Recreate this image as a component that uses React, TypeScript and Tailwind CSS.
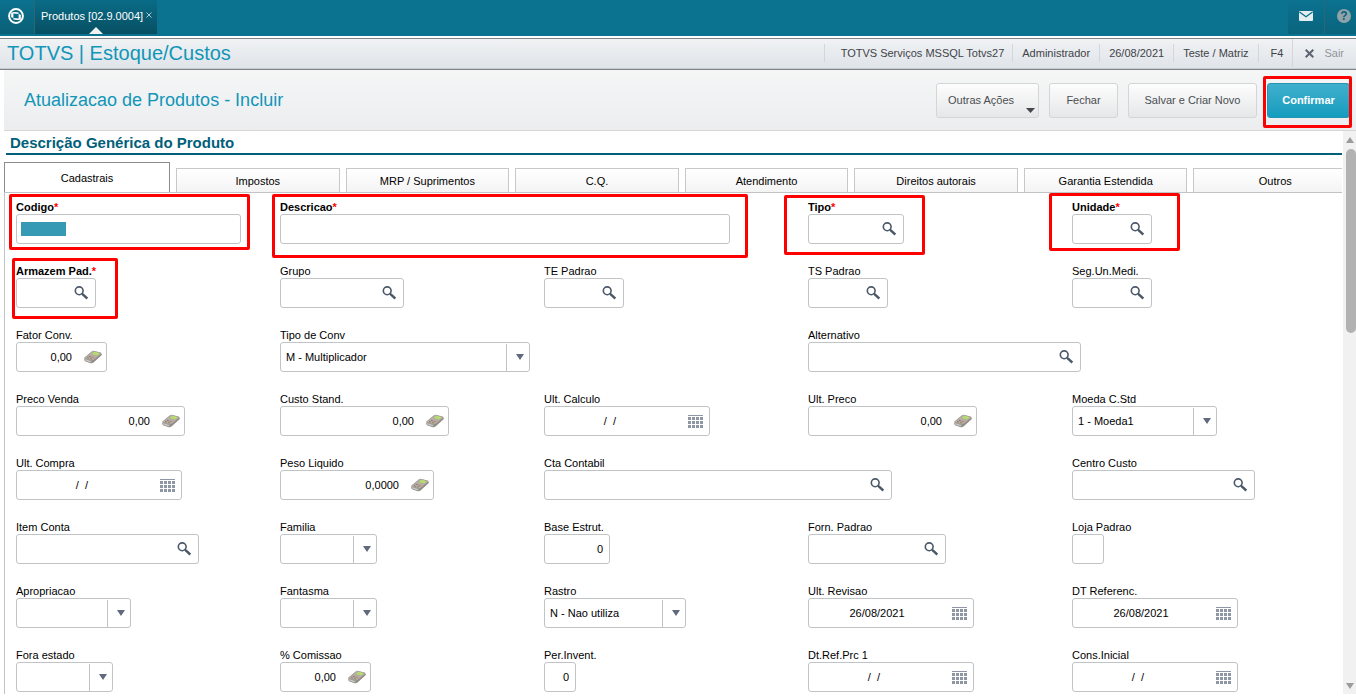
import React from "react";

type FieldKind = "text" | "search" | "number" | "date" | "select";

interface Field {
  id: string;
  label: string;
  kind: FieldKind;
  width: string;
  value?: string;
  span?: boolean;
  required?: boolean;
  // Classes of the red highlight frame
  frame?: string;
}

const FIELDS: Field[] = [
  { id: "codigo", label: "Codigo", kind: "text", width: "w-[225px]", required: true, frame: "-left-[7px] -top-[6px] w-[241px] h-[56px]" },
  { id: "descricao", label: "Descricao", kind: "text", width: "w-[450px]", span: true, required: true, frame: "-left-[8px] -top-[6px] w-[476px] h-[64px]" },
  { id: "tipo", label: "Tipo", kind: "search", width: "w-[96px]", required: true, frame: "-left-[24px] -top-[5px] w-[141px] h-[60px]" },
  { id: "unidade", label: "Unidade", kind: "search", width: "w-[80px]", required: true, frame: "-left-[23px] -top-[7px] w-[131px] h-[58px]" },

  { id: "armazem", label: "Armazem Pad.", kind: "search", width: "w-[80px]", required: true, frame: "-left-[4px] -top-[6px] w-[106px] h-[61px]" },
  { id: "grupo", label: "Grupo", kind: "search", width: "w-[124px]" },
  { id: "te", label: "TE Padrao", kind: "search", width: "w-[80px]" },
  { id: "ts", label: "TS Padrao", kind: "search", width: "w-[80px]" },
  { id: "segum", label: "Seg.Un.Medi.", kind: "search", width: "w-[80px]" },

  { id: "fator", label: "Fator Conv.", kind: "number", width: "w-[91px]", value: "0,00" },
  { id: "tipoconv", label: "Tipo de Conv", kind: "select", width: "w-[250px]", value: "M - Multiplicador", span: true },
  { id: "alternativo", label: "Alternativo", kind: "search", width: "w-[273px]", span: true },

  { id: "preco", label: "Preco Venda", kind: "number", width: "w-[169px]", value: "0,00" },
  { id: "custo", label: "Custo Stand.", kind: "number", width: "w-[169px]", value: "0,00" },
  { id: "ultcalculo", label: "Ult. Calculo", kind: "date", width: "w-[166px]" },
  { id: "ultpreco", label: "Ult. Preco", kind: "number", width: "w-[169px]", value: "0,00" },
  { id: "moeda", label: "Moeda C.Std", kind: "select", width: "w-[145px]", value: "1 - Moeda1" },

  { id: "ultcompra", label: "Ult. Compra", kind: "date", width: "w-[166px]" },
  { id: "peso", label: "Peso Liquido", kind: "number", width: "w-[154px]", value: "0,0000" },
  { id: "conta", label: "Cta Contabil", kind: "search", width: "w-[348px]", span: true },
  { id: "ccusto", label: "Centro Custo", kind: "search", width: "w-[183px]" },

  { id: "itemconta", label: "Item Conta", kind: "search", width: "w-[183px]" },
  { id: "familia", label: "Familia", kind: "select", width: "w-[97px]" },
  { id: "base", label: "Base Estrut.", kind: "text", width: "w-[66px]", value: "0" },
  { id: "fornecedor", label: "Forn. Padrao", kind: "search", width: "w-[138px]" },
  { id: "loja", label: "Loja Padrao", kind: "text", width: "w-[32px]" },

  { id: "apropriacao", label: "Apropriacao", kind: "select", width: "w-[115px]" },
  { id: "fantasma", label: "Fantasma", kind: "select", width: "w-[97px]" },
  { id: "rastro", label: "Rastro", kind: "select", width: "w-[142px]", value: "N - Nao utiliza" },
  { id: "ultrevisao", label: "Ult. Revisao", kind: "date", width: "w-[166px]", value: "26/08/2021" },
  { id: "dtreferenc", label: "DT Referenc.", kind: "date", width: "w-[166px]", value: "26/08/2021" },

  { id: "fora", label: "Fora estado", kind: "select", width: "w-[97px]" },
  { id: "comissao", label: "% Comissao", kind: "number", width: "w-[91px]", value: "0,00" },
  { id: "perinvent", label: "Per.Invent.", kind: "text", width: "w-[32px]", value: "0" },
  { id: "dtrefprc", label: "Dt.Ref.Prc 1", kind: "date", width: "w-[166px]" },
  { id: "consinicial", label: "Cons.Inicial", kind: "date", width: "w-[166px]" },
];

const TABS = ["Impostos", "MRP / Suprimentos", "C.Q.", "Atendimento", "Direitos autorais", "Garantia Estendida", "Outros"];

const SearchIcon = () => (
  <svg width="14" height="14" viewBox="0 0 14 14" fill="none" stroke="#4b5868">
    <circle cx="5.2" cy="4.8" r="3.9" strokeWidth="1.6" />
    <path d="M7.8 7.4 L9.5 9" strokeWidth="1.8" />
    <path d="M8.8 8.4 L13.3 12.6" strokeWidth="2.4" />
  </svg>
);

const CalculatorIcon = () => (
  <svg width="20" height="14" viewBox="0 0 20 14">
    <path d="M1.5 7.5 L9 1.2 Q10 0.6 11.5 1 L17.5 2.6 Q18.8 3 18.8 5 L10.5 12.4 Q9 13.6 7 13 L2 11.2 Q0.8 10.5 1.5 7.5 Z" fill="#8f8b86" />
    <path d="M1.8 7.4 L9.2 1.4 Q10 0.9 11.5 1.3 L17.3 2.8 Q18.5 3.3 17.6 4.2 L10.4 10 Q9.4 10.8 8 10.3 L2.4 8.6 Q1.2 8.2 1.8 7.4 Z" fill="#b5aca3" />
    <path d="M2 9 L8.4 11 L8.2 12.6 L2.4 10.7 Z" fill="#c9c7c4" />
    <path d="M9.6 3.2 L11.4 1.8 L16.6 3.3 L14.4 5.3 L9.4 4.2 Z" fill="#b5df68" />
    <path d="M4 7.6 L6 8.2 M5.8 6.2 L7.8 6.8 M7 8.6 L9 9.1" stroke="#85786d" strokeWidth="0.9" />
    <path d="M8.8 7.2 L10.6 7.7" stroke="#c2705a" strokeWidth="1" />
  </svg>
);

const CalendarIcon = () => (
  <svg width="15" height="14" viewBox="0 0 15 14" fill="#8f96a3">
    <rect width="15" height="1" />
    {[2, 6, 10].map((y) => [0, 4, 8, 12].map((x) => <rect key={`${x}-${y}`} x={x} y={y} width="3" height="3" />))}
  </svg>
);

const Asterisk = () => <span className="text-[#ff0000]">*</span>;

const INPUT = "min-w-0 flex-1 bg-transparent text-[11px] text-black outline-none";
const ICON_BUTTON = "flex h-full shrink-0 items-center justify-center";

const FieldControl: React.FC<{ field: Field }> = ({ field }) => {
  const { id, kind, value = "" } = field;

  if (kind === "select") {
    return (
      <>
        <select id={id} defaultValue={value} className={`${INPUT} h-full appearance-none pl-[5px]`}>
          <option value={value}>{value}</option>
        </select>
        <span className="pointer-events-none mt-px flex h-[27px] w-[23px] shrink-0 items-center justify-center border-l border-[#c0c4c6] pb-px pl-[4px]">
          <svg width="8" height="6" viewBox="0 0 8 6" fill="#5f6a7d">
            <path d="M0 0 H8 L4 6 Z" />
          </svg>
        </span>
      </>
    );
  }

  if (kind === "search") {
    return (
      <>
        <input id={id} type="text" defaultValue={value} className={`${INPUT} pl-[5px]`} />
        <button type="button" aria-label={`Pesquisar ${field.label}`} className={`${ICON_BUTTON} w-[28px]`}>
          <SearchIcon />
        </button>
      </>
    );
  }

  if (kind === "number") {
    return (
      <>
        <input id={id} type="text" defaultValue={value} className={`${INPUT} text-right`} />
        <button type="button" aria-label={`Calculadora ${field.label}`} className={`${ICON_BUTTON} w-[34px] pl-[7px]`}>
          <CalculatorIcon />
        </button>
      </>
    );
  }

  if (kind === "date") {
    return (
      <>
        {/* an empty date keeps the blanks of its mask */}
        <input id={id} type="text" defaultValue={value || "/  /  "} className={`${INPUT} text-center`} />
        <button type="button" aria-label={`Calendario ${field.label}`} className={`${ICON_BUTTON} w-[28px] pt-[2px]`}>
          <CalendarIcon />
        </button>
      </>
    );
  }

  return <input id={id} type="text" defaultValue={value} className={`${INPUT} px-[6px] text-right`} />;
};

const FormField: React.FC<{ field: Field }> = ({ field }) => (
  <div className={`relative ${field.span ? "col-span-2" : ""}`}>
    <label htmlFor={field.id} className={`block h-[14px] text-[11px] leading-[14px] ${field.required ? "font-bold" : ""}`}>
      {field.label}
      {field.required && <Asterisk />}
    </label>
    <div className={`flex h-[30px] items-center rounded-[3px] border border-[#c0c4c6] bg-white ${field.width}`}>
      {field.id === "codigo" && <span className="ml-[4px] h-[14px] w-[45px] bg-[#369ab4]" />}
      <FieldControl field={field} />
    </div>
    {field.frame && <div className={`pointer-events-none absolute rounded-[2px] border-3 border-[#ff0000] ${field.frame}`} />}
  </div>
);

const TopBar = () => (
  <div className="flex h-[36px] items-start justify-between bg-[#0b728f] text-white">
    <div className="flex h-[34px]">
      <button type="button" aria-label="Menu" className="flex w-[35px] items-center justify-center border-r border-[#2a6878] bg-linear-to-b from-[#0b728f] to-[#0a5f76] pb-[2px] pr-[2px]">
        <svg width="16" height="16" viewBox="0 0 16 16">
          <circle cx="8" cy="8" r="6.9" fill="none" stroke="#fff" strokeWidth="2" />
          <path d="M3.2 4.6 Q6.5 3.4 10.6 4.4 L10.6 6 L5.4 5.6 L5.4 10 L3.2 9.2 Z" fill="#fff" />
          <path d="M12.8 11.4 Q9.5 12.6 5.4 11.6 L5.4 10 L10.6 10.4 L10.6 6 L12.8 6.8 Z" fill="#fff" />
        </svg>
      </button>
      <div className="relative flex w-[122px] items-center bg-linear-to-b from-[#0a6c87] to-[#074f63] pb-[2px] pl-[6px] text-[11px]">
        <a href="#produtos">Produtos [02.9.0004]</a>
        <button type="button" aria-label="Fechar aba" className="ml-[3px] pb-[2px] text-[#a9c8d2]">
          <svg width="6" height="6" viewBox="0 0 6 6" fill="none" stroke="currentColor">
            <path d="M0.5 0.5 L5.5 5.5 M5.5 0.5 L0.5 5.5" />
          </svg>
        </button>
        <svg className="absolute bottom-0 left-[54px]" width="14" height="7" viewBox="0 0 14 7" fill="#eef2f4">
          <path d="M7 0 L14 7 H0 Z" />
        </svg>
      </div>
    </div>
    <div className="flex h-[34px]">
      <button type="button" aria-label="Mensagens" className="flex w-[37px] items-center justify-center border-r border-[#2a6878] bg-linear-to-b from-[#0b728f] to-[#0a647d] pb-[2px] pr-px">
        <svg width="14" height="10" viewBox="0 0 14 10">
          <rect width="14" height="10" rx="1" fill="#e4eef1" />
          <path d="M0.5 1 L7 5.8 L13.5 1" fill="none" stroke="#0a6a85" strokeWidth="1.2" />
        </svg>
      </button>
      <button type="button" aria-label="Ajuda" className="flex w-[31px] items-center justify-end bg-linear-to-b from-[#0b728f] to-[#0a647d] pb-[2px] pr-[5px]">
        <span className="flex h-[14px] w-[14px] items-center justify-center rounded-full bg-[#8fa3ab] text-[12px] font-bold text-[#0a5f78]">?</span>
      </button>
    </div>
  </div>
);

const STATUS = "flex h-[18px] items-center border-l border-[#d3d7da]";

const ModuleBar = () => (
  <header className="mt-[2px] flex h-[32px] items-center justify-between border-y border-[#7f8487] bg-linear-to-b from-[#f0f2f4] to-[#dfe4e9] pb-[2px] shadow-[inset_0_-1px_0_#c6cdd3]">
    <h1 className="pl-[7px] text-[20px] leading-[24px] text-[#1196b8]">TOTVS | Estoque/Custos</h1>
    <div className="flex items-center text-[11px] text-[#3f4347]">
      <span className={`${STATUS} pl-[16px] pr-[8px]`}>TOTVS Serviços MSSQL Totvs27</span>
      <span className={`${STATUS} px-[9px]`}>Administrador</span>
      <span className={`${STATUS} px-[9px]`}>26/08/2021</span>
      <span className={`${STATUS} px-[9px]`}>Teste / Matriz</span>
      <span className={`${STATUS} pl-[12px] pr-[9px]`}>F4</span>
      <button type="button" className="flex h-[28px] items-center border-l border-[#d3d7da] px-[12px] text-[#8f959b]">
        <svg className="mr-[10px]" width="9" height="9" viewBox="0 0 9 9" fill="none" stroke="#5b6470" strokeWidth="2">
          <path d="M0.7 0.7 L8.3 8.3 M8.3 0.7 L0.7 8.3" />
        </svg>
        Sair
      </button>
    </div>
  </header>
);

const BUTTON = "h-[35px] rounded-[3px] border border-[#d3d5d6] bg-linear-to-b from-[#fdfdfd] to-[#e6e7e8] text-[11px] text-[#4a4e52]";

const ActionBar = () => (
  <div className="ml-[4px] flex h-[61px] items-center justify-between border-b border-[#d6d6d6] bg-linear-to-b from-[#f5f6f6] to-[#ecedef] pl-[20px] pr-[6px]">
    <h2 className="text-[18px] text-[#1196b8]">Atualizacao de Produtos - Incluir</h2>
    <div className="flex items-center gap-[10px] pt-px">
      <button type="button" className={`${BUTTON} relative w-[103px] pl-[11px] text-left`}>
        Outras Ações
        <svg className="absolute bottom-[4px] right-[3px]" width="9" height="5" viewBox="0 0 9 5" fill="#43484e">
          <path d="M0 0 H9 L4.5 5 Z" />
        </svg>
      </button>
      <button type="button" className={`${BUTTON} w-[69px]`}>Fechar</button>
      <button type="button" className={`${BUTTON} w-[129px]`}>Salvar e Criar Novo</button>
      <div className="relative flex">
        <button type="button" className="h-[35px] w-[83px] rounded-[3px] border border-[#2595b2] bg-linear-to-b from-[#3fafcd] to-[#109cbf] text-[11px] font-bold text-white">
          Confirmar
        </button>
        <div className="pointer-events-none absolute -left-[4px] -top-[7px] h-[52px] w-[89px] rounded-[2px] border-3 border-[#ff0000]" />
      </div>
    </div>
  </div>
);

const TabBar = () => (
  <div role="tablist" className="flex h-[31px] items-end overflow-hidden border-b border-[#c0c4c6] text-[11px]">
    <button type="button" role="tab" aria-selected="true" className="h-[30px] w-[166px] shrink-0 border border-b-0 border-[#8a8d8f] bg-white pt-px">
      Cadastrais
    </button>
    <div className="-mr-[15px] ml-[6px] flex flex-1 gap-[6px]">
      {TABS.map((tab) => (
        <button
          key={tab}
          type="button"
          role="tab"
          aria-selected="false"
          className="h-[24px] min-w-0 flex-1 basis-0 border border-b-0 border-[#c6c8ca] bg-linear-to-b from-white to-[#f4f4f4] pt-[2px]"
        >
          {tab}
        </button>
      ))}
    </div>
  </div>
);

const ScrollBar = () => (
  <div className="flex w-[13px] shrink-0 flex-col items-center bg-[#f1f1f1]">
    <svg className="mt-[6px]" width="8" height="6" viewBox="0 0 8 6" fill="#9b9b9b">
      <path d="M0 6 H8 L4 0 Z" />
    </svg>
    <div className="mt-[6px] h-[184px] w-[10px] self-end rounded-full bg-[#b2b2b2]" />
    <svg className="mb-[5px] mt-auto" width="8" height="6" viewBox="0 0 8 6" fill="#9b9b9b">
      <path d="M0 0 H8 L4 6 Z" />
    </svg>
  </div>
);

export default function App() {
  return (
    <div className="min-h-screen bg-white font-['Liberation_Sans',Arial,sans-serif] text-black">
      <TopBar />
      <ModuleBar />
      <ActionBar />
      <main className="flex">
        <div className="min-w-0 flex-1 pl-[4px] pr-px">
          <h3 className="ml-[2px] border-b-2 border-[#00607a] pb-px pl-[4px] pt-[2px] text-[15px] leading-[19px] font-bold text-[#00607a]">
            Descrição Genérica do Produto
          </h3>
          <div className="pt-[7px]">
            <TabBar />
          </div>
          <form className="grid grid-cols-5 gap-y-[20px] border-l border-[#c0c4c6] pb-[2px] pl-[11px] pr-[6px] pt-[7px]">
            {FIELDS.map((field) => (
              <FormField key={field.id} field={field} />
            ))}
          </form>
        </div>
        <ScrollBar />
      </main>
    </div>
  );
}
